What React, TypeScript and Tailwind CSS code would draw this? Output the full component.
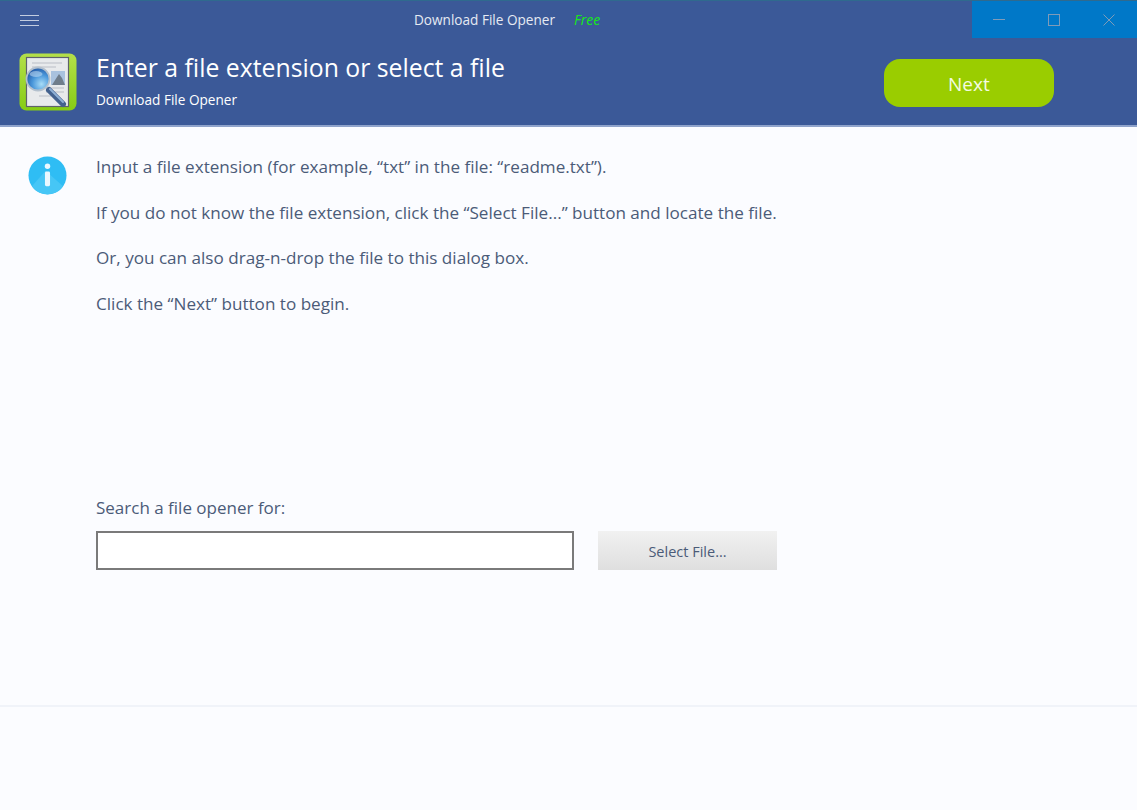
const lines = [
  "Input a file extension (for example, “txt” in the file: “readme.txt”).",
  "If you do not know the file extension, click the “Select File...” button and locate the file.",
  "Or, you can also drag-n-drop the file to this dialog box.",
  "Click the “Next” button to begin.",
];

const AppIcon = () => (
  <svg width="58" height="58" viewBox="0 0 58 58" className="shrink-0">
    <defs>
      <linearGradient id="frame" x1="0" y1="0" x2="0" y2="1">
        <stop offset="0" stopColor="#b4e04a" />
        <stop offset="1" stopColor="#86cc14" />
      </linearGradient>
      <radialGradient id="lens" cx="0.65" cy="0.72" r="0.8">
        <stop offset="0" stopColor="#a8dcf7" />
        <stop offset="0.5" stopColor="#4a97da" />
        <stop offset="1" stopColor="#1c4f9e" />
      </radialGradient>
    </defs>
    <rect width="57" height="57" x="0.5" y="0.5" rx="7" fill="url(#frame)" />
    <rect x="7.5" y="4.5" width="42" height="49" fill="#e8eaec" stroke="#5f636b" strokeWidth="1.2" />
    <path d="M13 10h30M13 14h24M27 35h18M27 39h18M20 43h12" stroke="#b9bec6" strokeWidth="1.2" />
    <rect x="32" y="18" width="14" height="14" fill="#a9c2de" />
    <path d="M33 32l5-8 2-3 3 4 3 7z" fill="#6f7d8b" />
    <path d="M30 37l14 14" stroke="#43618e" strokeWidth="6" strokeLinecap="round" />
    <path d="M31 36l13 13" stroke="#8fb0d6" strokeWidth="2" strokeLinecap="round" />
    <circle cx="19" cy="26" r="11.5" fill="url(#lens)" stroke="#b3c0cd" strokeWidth="1.8" />
    <ellipse cx="17" cy="21" rx="6.5" ry="3" fill="#cfe6f8" opacity="0.5" />
  </svg>
);

const InfoIcon = () => (
  <svg width="39" height="39" viewBox="0 0 40 40" className="shrink-0">
    <circle cx="20" cy="20" r="19.5" fill="#2fbdf4" />
    <path d="M4 31A19.5 19.5 0 0 0 36 31L18 15z" fill="#46c6f6" />
    <circle cx="20" cy="10.5" r="2.8" fill="#eaf8ff" />
    <rect x="17.4" y="16" width="5.2" height="15" rx="1.4" fill="#eaf8ff" />
  </svg>
);

export default function App() {
  return (
    <div className="flex h-[810px] w-full flex-col bg-[#fbfcff] font-['Open_Sans',sans-serif] text-[#4b5b78]">
      <header className="h-[127px] shrink-0 border-t border-b-2 border-t-[#2f6a8e] border-b-[#8fa3cb] bg-[#3b5998] text-white">
        <div className="flex h-[37px] items-start">
          <svg width="19" height="12" viewBox="0 0 19 12" className="mt-[14px] ml-[20px] shrink-0" fill="none" stroke="#c3cde0" strokeWidth="1">
            <path d="M0 .5h19M0 5.5h19M0 10.5h19" />
          </svg>
          <span className="mt-[9px] ml-[375px] w-[160px] text-[13.6px] leading-[20px] text-[#e6eaf3]">Download File Opener</span>
          <span className="mt-[9px] text-[14px] leading-[20px] font-medium text-[#16ec16] italic">Free</span>
          <div className="ml-auto flex h-[37px] w-[165px] items-center justify-between bg-[#0078c8] pr-[22px] pl-[21px]">
            <svg width="12" height="13" viewBox="0 0 12 13" fill="none" stroke="#7f9bb8" strokeWidth="1">
              <path d="M0 6.5h12" />
            </svg>
            <svg width="12" height="12" viewBox="0 0 12 12" fill="none" stroke="#7f9bb8" strokeWidth="1">
              <rect x="0.5" y="0.5" width="11" height="11" />
            </svg>
            <svg width="12" height="12" viewBox="0 0 12 12" fill="none" stroke="#7f9bb8" strokeWidth="1">
              <path d="M.5.5l11 11M11.5.5l-11 11" />
            </svg>
          </div>
        </div>
        <div className="flex items-start pl-[19px]">
          <div className="mt-[15px]"><AppIcon /></div>
          <div className="ml-[19px] flex flex-col">
            <h1 className="mt-[9px] text-[24.8px] leading-[40px] font-normal">Enter a file extension or select a file</h1>
            <p className="mt-[3px] text-[13.6px] leading-[20px]">Download File Opener</p>
          </div>
          <button className="mt-[21px] ml-[379px] flex h-[48px] w-[170px] items-center justify-center rounded-[16px] bg-[#9acd00] pt-[3px] text-[19px] text-[#f4fbe0]">Next</button>
        </div>
      </header>
      <main className="flex min-h-0 flex-1 flex-col">
        <div className="flex pt-[29px] pl-[28px]">
          <InfoIcon />
          <div className="ml-[29px] flex flex-col gap-[23px] text-[17.1px] leading-[22.5px]">
            {lines.map((line) => (
              <p key={line}>{line}</p>
            ))}
          </div>
        </div>
        <div className="mt-[182px] pl-[96px]">
          <label className="block text-[17px] leading-[22px]">Search a file opener for:</label>
          <div className="mt-[12px] flex gap-[24px]">
            <input className="h-[39px] w-[478px] border-2 border-[#7a7a7a] bg-white outline-none" />
            <button className="h-[39px] w-[179px] bg-gradient-to-b from-[#f1f1f1] to-[#dfdfdf] pt-[2px] text-[14.5px] text-[#4b5b78]">Select File...</button>
          </div>
        </div>
        <div className="mt-auto mb-[103px] h-[2px] bg-[#f0f3f9]" />
      </main>
    </div>
  );
}
